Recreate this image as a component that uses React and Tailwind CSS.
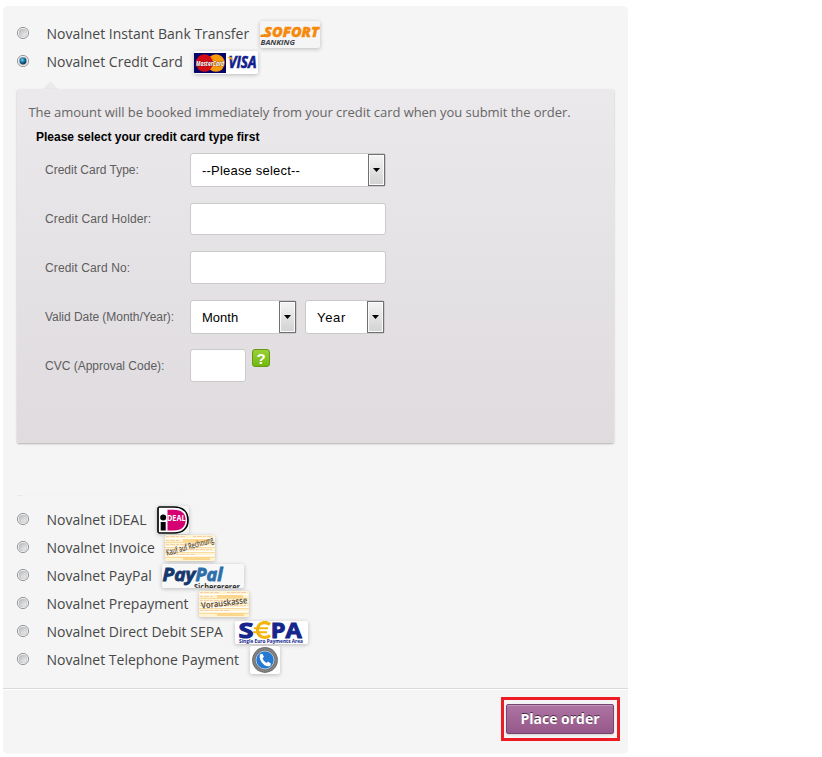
import React from "react";

function Radio({ checked = false }) {
  return (
    <svg className="mr-[17px] -mt-[2px] h-[14px] w-[14px] shrink-0" viewBox="0 0 14 14">
      <defs>
        <linearGradient id="radioGrey" x1="0" y1="0" x2="1" y2="1">
          <stop offset="0" stopColor="#b4b6ba" />
          <stop offset="1" stopColor="#f5f5f5" />
        </linearGradient>
        <radialGradient id="radioBlue" cx=".4" cy=".35" r=".65">
          <stop offset="0" stopColor="#7fd6f5" />
          <stop offset=".45" stopColor="#1c7fb0" />
          <stop offset="1" stopColor="#0b2f4c" />
        </radialGradient>
      </defs>
      <circle cx="7" cy="7" r="5.6" fill="#f6f6f6" stroke="#8b8c8e" strokeWidth="0.9" />
      <circle cx="7" cy="7" r="4" fill="url(#radioGrey)" stroke="#b9bbbe" strokeWidth="0.6" />
      {checked && <circle cx="7" cy="7" r="3.4" fill="url(#radioBlue)" />}
    </svg>
  );
}

function Option({ label, checked, labelClass, logoClass, children }) {
  return (
    <div className="flex h-7 items-start">
      <div className="flex h-7 shrink-0 items-center">
        <Radio checked={checked} />
        <span className={"-ml-[0.5px] mr-[0.5px] whitespace-nowrap text-[14px] leading-7 text-[#484848] " + labelClass}>{label}</span>
      </div>
      <div className={"shrink-0 overflow-hidden rounded-[2px] shadow-[0_1px_4px_rgba(0,0,0,0.24)] " + logoClass}>
        {children}
      </div>
    </div>
  );
}

const logoText = { fontFamily: '"Open Sans", sans-serif' };

function Sofort() {
  return (
    <svg className="block" width="60" height="27" viewBox="0 0 60 27" {...logoText}>
      <path d="M1 13.5H7L6 16H0Z" fill="#f18a0c" />
      <text x="4" y="15.9" fontSize="14" fontWeight="800" fontStyle="italic" fill="#f6890a" stroke="#f6890a" strokeWidth=".4" textLength="55" lengthAdjust="spacingAndGlyphs">SOFORT</text>
      <text x="0.5" y="23.5" fontSize="7.6" fontWeight="700" fontStyle="italic" fill="#3d3d45" textLength="34.5" lengthAdjust="spacingAndGlyphs">BANKING</text>
    </svg>
  );
}

function Cards() {
  return (
    <svg className="block" width="64" height="23" viewBox="0 0 64 23" {...logoText}>
      <rect x="0" y="2" width="32" height="20" fill="#050568" />
      <circle cx="22" cy="12" r="8.7" fill="#f79a0c" />
      <circle cx="10.5" cy="12" r="8.7" fill="#d20a14" />
      <path d="M16 5.5A8.7 8.7 0 0 1 16 18.5" fill="none" stroke="#f79a0c" strokeWidth="1" strokeDasharray="1 1" />
      <text x="2" y="14.5" fontSize="7" fontWeight="700" fontStyle="italic" fill="#fff" stroke="#421010" strokeWidth=".5" paintOrder="stroke" textLength="28" lengthAdjust="spacingAndGlyphs">MasterCard</text>
      <text x="34.5" y="17.3" fontSize="15.6" fontWeight="700" fontStyle="italic" fill="#141e8c" stroke="#141e8c" strokeWidth=".6" textLength="28" lengthAdjust="spacingAndGlyphs">VISA</text>
      <path d="M33 6H37.5L38.5 9.5Q36 7 33 6Z" fill="#f5a21b" />
    </svg>
  );
}

function Ideal() {
  return (
    <svg className="block" width="32" height="28" viewBox="0 0 32 28" {...logoText}>
      <path d="M2.5 1H17C26 1 31 6 31 14S26 27 17 27H2.5Q1 27 1 25.5V2.5Q1 1 2.5 1Z" fill="#fff" stroke="#050505" strokeWidth="1.7" />
      <path d="M10.5 3.8H17C24.5 3.8 28.6 7.5 28.6 14S24.5 24.5 17 24.5H10.5Z" fill="#d50172" />
      <circle cx="6.2" cy="11.5" r="3" fill="#050505" />
      <rect x="3.7" y="16" width="5" height="8.5" fill="#050505" />
      <text x="10" y="14.5" fontSize="8" fontWeight="700" fill="#fff" textLength="18.5" lengthAdjust="spacingAndGlyphs">DEAL</text>
    </svg>
  );
}

function Slip({ children }) {
  return (
    <svg className="block" width="50" height="26" viewBox="0 0 50 26" {...logoText}>
      <rect width="50" height="26" fill="#fff4cf" />
      <g fill="#f8dca0">
        <rect y="7" width="50" height="1" />
        <rect y="12" width="50" height="1" />
        <rect y="17" width="50" height="1" />
        <rect y="22" width="50" height="1" />
        <rect x="18" y="4" width="26" height="3" fill="#fbd68c" />
        <rect x="18" y="22" width="27" height="3" fill="#fbd68c" />
      </g>
      <path d="M1 1.5H20M1 5.5H14M1 9.5H40M1 14.5H47M1 19.5H30M28 1.5H48" stroke="#efbd9f" strokeWidth=".7" strokeDasharray="3 1 5 1" />
      <path d="M1 3.5H49M1 11.5H49M1 16.5H49M1 20.5H49" stroke="#fff" strokeWidth="1" />
      {children}
    </svg>
  );
}

function Invoice() {
  return (
    <Slip>
      <text x="2" y="21" fontSize="9" fontWeight="600" fill="#5a5046" transform="rotate(-16 2 21)" textLength="49" lengthAdjust="spacingAndGlyphs">Kauf auf Rechnung</text>
    </Slip>
  );
}

function Prepayment() {
  return (
    <Slip>
      <text x="2.5" y="17.8" fontSize="9" fontWeight="600" fill="#514b44" transform="rotate(-7 2.5 17.8)" textLength="46.5" lengthAdjust="spacingAndGlyphs">Vorauskasse</text>
    </Slip>
  );
}

function PayPal() {
  return (
    <svg className="block" width="82" height="24" viewBox="0 0 82 24" {...logoText}>
      <text x="0.5" y="16.5" fontSize="18.3" fontWeight="700" fontStyle="italic" fill="#15386e" stroke="#15386e" strokeWidth=".8" textLength="33" lengthAdjust="spacingAndGlyphs">Pay</text>
      <text x="33.5" y="16.5" fontSize="18.3" fontWeight="700" fontStyle="italic" fill="#2d6fa8" stroke="#2d6fa8" strokeWidth=".8" textLength="27" lengthAdjust="spacingAndGlyphs">Pal</text>
      <text x="32" y="25.6" fontSize="9" fontWeight="700" fill="#333" textLength="48" lengthAdjust="spacingAndGlyphs">Sicherererer.</text>
    </svg>
  );
}

function Sepa() {
  return (
    <svg className="block" width="73" height="23" viewBox="0 0 73 23" {...logoText}>
      <text x="3.5" y="16.5" fontSize="22" fontWeight="700" fill="#14268c" stroke="#14268c" strokeWidth="1" textLength="15" lengthAdjust="spacingAndGlyphs">S</text>
      <path d="M35 3.5C30 -.5 22.5 2 22.5 9S30 18.5 35 14.5" fill="none" stroke="#f3b40c" strokeWidth="3.2" />
      <path d="M19 7.3H33M18 11.2H32" stroke="#f3b40c" strokeWidth="2" />
      <text x="35.8" y="16.5" fontSize="22" fontWeight="700" fill="#14268c" stroke="#14268c" strokeWidth="1" textLength="31" lengthAdjust="spacingAndGlyphs">PA</text>
      <text x="4" y="21.6" fontSize="5" fontWeight="700" fill="#14268c" textLength="64" lengthAdjust="spacingAndGlyphs">Single Euro Payments Area</text>
    </svg>
  );
}

function Phone() {
  return (
    <svg className="block" width="30" height="28" viewBox="0 0 30 28">
      <circle cx="15" cy="14" r="12.9" fill="#737373" />
      <circle cx="15" cy="14" r="11" fill="none" stroke="#969696" strokeWidth="1.2" strokeDasharray="1 .8" />
      <circle cx="15" cy="14" r="9" fill="#2479d3" stroke="#c7d8e9" strokeWidth=".8" />
      <path d="M10.2 8.3L12.4 7.7L14 11L12.5 12.2C13.3 14.4 14.6 15.9 16.7 16.9L18 15.6L21 17.7L20.2 19.8C17.5 21.4 13.8 19.2 11.6 16.2C9.7 13.6 9 10.1 10.2 8.3Z" fill="#fff" />
    </svg>
  );
}

function Select({ children, className }) {
  return (
    <div className={"flex h-[34px] items-stretch rounded-[3px] border border-[#cacaca] bg-white " + className}>
      <span className="flex-1 whitespace-nowrap pl-[11px] text-[13px] leading-[33px] text-black">{children}</span>
      <span className="flex w-[17px] items-center justify-center border border-[#707070] bg-linear-to-b from-[#f4f4f4] to-[#d2d2d2] shadow-[inset_0_0_0_1px_#fafafa]">
        <svg width="7" height="4" viewBox="0 0 7 4"><path d="M0 0H7L3.5 4Z" /></svg>
      </span>
    </div>
  );
}

function Field({ label, labelClass = "", children }) {
  return (
    <div className="flex h-[49px] items-start">
      <span className={"w-[145px] shrink-0 whitespace-nowrap text-[12px] leading-[34px] text-[#5d5d5d] " + labelClass}>{label}</span>
      {children}
    </div>
  );
}

export default function App() {
  return (
    <div className="h-[757px] w-[822px] bg-white pl-[3px] pt-[6px] font-['Open_Sans',sans-serif]">
      <div className="flex h-[748px] w-[625px] flex-col rounded-[5px] bg-[#f5f5f5] pt-[14px]">
        <div className="pl-[13px]">
          <Option label="Novalnet Instant Bank Transfer" labelClass="w-[213px]" logoClass="mt-px"><Sofort /></Option>
          <Option label="Novalnet Credit Card" checked labelClass="w-[147px]" logoClass="mt-[3px] bg-white"><Cards /></Option>
        </div>
        <svg className="ml-[40px] mt-[5px] block h-[8px] w-[15px]" viewBox="0 0 15 8"><path d="M0 8L7.5 0L15 8Z" fill="#ebe9eb" /></svg>
        <div className="ml-[14px] h-[354px] w-[597px] shrink-0 rounded-[2px] bg-linear-to-b from-[#ebe9eb] to-[#dfdbdf] pt-[13px] shadow-[0_1px_2px_rgba(0,0,0,0.28)]">
          <p className="whitespace-nowrap pl-[11.5px] text-[13px] leading-5 tracking-[-0.05px] text-[#666]">The amount will be booked immediately from your credit card when you submit the order.</p>
          <div className="pl-[28px] font-['Liberation_Sans',Arial,sans-serif]">
            <p className="-ml-[9px] mt-[5px] h-[26px] text-[12px] font-bold leading-[20px] text-black">Please select your credit card type first</p>
            <Field label="Credit Card Type:"><Select className="w-[196px] tracking-[0.2px]">--Please select--</Select></Field>
            <Field label="Credit Card Holder:" labelClass="tracking-[0.15px]"><div className="mt-px h-[32px] w-[196px] rounded-[3px] border border-[#cacaca] bg-white" /></Field>
            <Field label="Credit Card No:" labelClass="tracking-[0.12px]"><div className="h-[33px] w-[196px] rounded-[3px] border border-[#cacaca] bg-white" /></Field>
            <Field label="Valid Date (Month/Year):" labelClass="tracking-[-0.04px]">
              <Select className="w-[107px]">Month</Select>
              <Select className="ml-[8px] w-[80px] tracking-[0.7px]">Year</Select>
            </Field>
            <Field label="CVC (Approval Code):">
              <div className="h-[33px] w-[56px] rounded-[3px] border border-[#cacaca] bg-white" />
              <span className="ml-[6px] flex h-[18px] w-[18px] items-center justify-center rounded-[3px] border border-[#619b13] bg-linear-to-b from-[#9bcf35] to-[#72b90c] text-[15px] font-bold leading-none text-white">?</span>
            </Field>
          </div>
        </div>
        <div className="ml-[14px] mt-[52px] h-px w-[166px] bg-[#f3f3f3]"><div className="h-px w-[5px] bg-[#e9e9e9]" /></div>
        <div className="mt-[10px] pl-[13px]">
          <Option label="Novalnet iDEAL" labelClass="w-[110px]" logoClass=""><Ideal /></Option>
          <Option label="Novalnet Invoice" labelClass="w-[118px]" logoClass="mt-px"><Invoice /></Option>
          <Option label="Novalnet PayPal" labelClass="w-[115px]" logoClass="mt-[2px] bg-[#f8f8f8]"><PayPal /></Option>
          <Option label="Novalnet Prepayment" labelClass="w-[152px]" logoClass="mt-px"><Prepayment /></Option>
          <Option label="Novalnet Direct Debit SEPA" labelClass="w-[188px]" logoClass="mt-[3px] bg-white"><Sepa /></Option>
          <Option label="Novalnet Telephone Payment" labelClass="w-[203px]" logoClass="bg-white"><Phone /></Option>
        </div>
        <div className="mt-[14px] flex flex-1 items-start justify-end border-t border-[#dadada] pr-[8px] pt-[8px] shadow-[inset_0_1px_0_#fff]">
          <div className="h-[44px] w-[119px] border-[3px] border-[#ed1c24] px-[2px] pt-[4px]">
            <button className="block h-[30px] w-[108px] whitespace-nowrap rounded-[2px] border border-[#76456c] bg-linear-to-b from-[#ad74a2] to-[#96588a] text-[14px] font-bold leading-[28px] text-white shadow-[inset_0_1px_0_rgba(255,255,255,0.25),0_1px_2px_rgba(0,0,0,0.15)] [text-shadow:0_-1px_0_rgba(0,0,0,0.6)]">Place order</button>
          </div>
        </div>
      </div>
    </div>
  );
}
